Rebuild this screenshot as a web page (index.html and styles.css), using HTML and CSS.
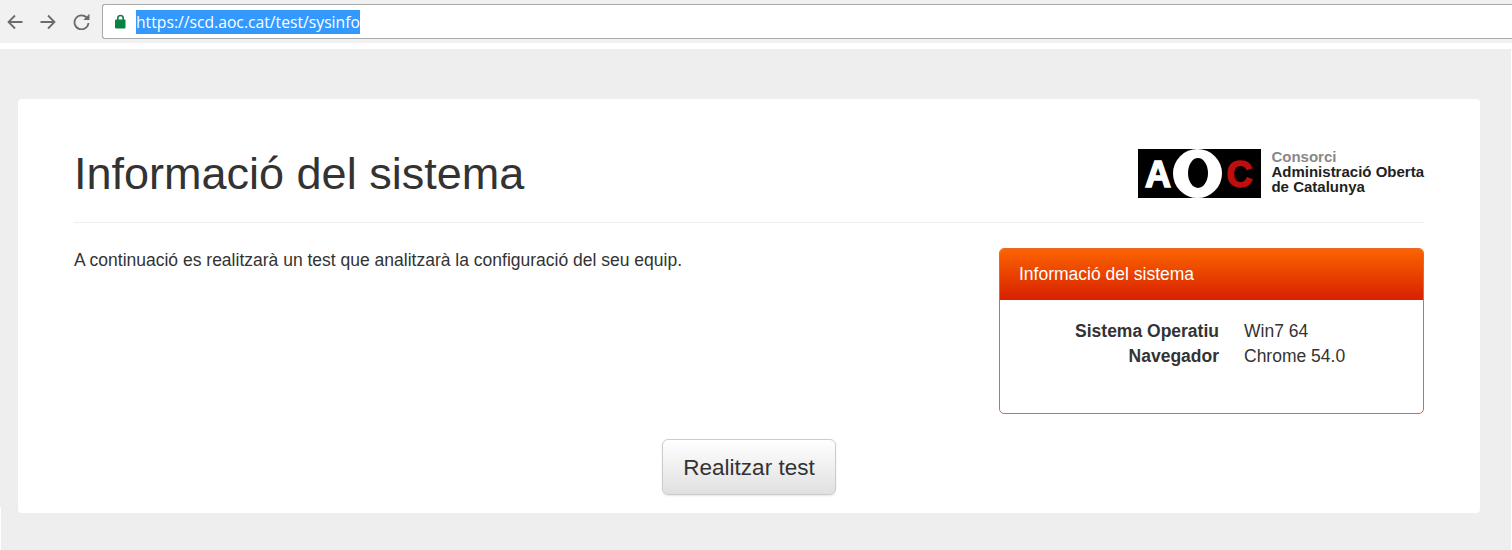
FILE: index.html
```html
<!DOCTYPE html>
<html>
<head>
    <title>Informació del sistema</title>
    <meta charset="UTF-8">
    <link rel="stylesheet" href="styles.css">
</head>
<body>
    <!-- Browser chrome -->
    <div class="toolbar">
        <svg class="nav-icon" width="16" height="16" viewBox="0 0 16 16"><path d="M15.5 8H1.5M8 1.5L1.5 8L8 14.5"/></svg>
        <svg class="nav-icon" width="16" height="16" viewBox="0 0 16 16"><path d="M0.5 8H14.5M8 1.5L14.5 8L8 14.5"/></svg>
        <svg class="nav-icon" width="17" height="17" viewBox="0 0 17 17"><path d="M14.2 5.2A7 7 0 1 0 15.5 10"/><path class="fill" d="M16.5 0.8V7H10.3Z"/></svg>
        <div class="address">
            <svg class="lock" width="11" height="15" viewBox="0 0 11 15"><path d="M2.8 6V4.2a2.7 2.7 0 0 1 5.4 0V6" fill="none" stroke="#0b8043" stroke-width="1.6"/><rect y="5.5" width="10.5" height="9" rx="1" fill="#0b8043"/></svg>
            <span class="url">https://scd.aoc.cat/test/sysinfo</span>
        </div>
    </div>
    <div class="strip"></div>

    <div class="page">
        <div class="card">
            <div class="card-header">
                <h1>Informació del sistema</h1>
                <div class="logo">
                    <svg width="123" height="49" viewBox="0 0 123 49">
                        <rect width="123" height="49" fill="#000"/>
                        <text class="logo-letter" x="7" y="38" fill="#fff" stroke="#fff">A</text>
                        <ellipse cx="59.5" cy="24.5" rx="24.5" ry="24.5" fill="#fff"/>
                        <ellipse cx="60" cy="24" rx="10" ry="15" fill="#000"/>
                        <text class="logo-letter" x="88.5" y="38" fill="#c00d0d" stroke="#c00d0d">C</text>
                    </svg>
                    <div class="logo-text">
                        <span class="logo-grey">Consorci</span>
                        <span>Administració Oberta</span>
                        <span>de Catalunya</span>
                    </div>
                </div>
            </div>

            <div class="card-body">
                <p class="intro">A continuació es realitzarà un test que analitzarà la configuració del seu equip.</p>
                <div class="panel">
                    <div class="panel-heading">Informació del sistema</div>
                    <dl class="panel-body">
                        <dt>Sistema Operatiu</dt>
                        <dd>Win7 64</dd>
                        <dt>Navegador</dt>
                        <dd>Chrome 54.0</dd>
                    </dl>
                </div>
            </div>

            <div class="actions">
                <button class="test-button">Realitzar test</button>
            </div>
        </div>
    </div>
</body>
</html>
```

FILE: styles.css
```css
/* Basic Reset */
* {
    box-sizing: border-box;
    margin: 0;
    padding: 0;
}

html, body {
    width: 1512px;
    height: 550px;
    overflow: hidden;
    background: #ffffff;
    font-family: 'Liberation Sans', Arial, sans-serif;
    color: #333333;
}

/* Browser chrome */
.toolbar {
    display: flex;
    align-items: center;
    height: 43px;
    padding: 4px 0 4px 7px;
    background: #f1f1f1;
}

.nav-icon {
    margin-right: 17px;
    flex: none;
}

.nav-icon path {
    fill: none;
    stroke: #6b6b6b;
    stroke-width: 1.8;
}

.nav-icon path.fill {
    fill: #6b6b6b;
    stroke: none;
}

.address {
    display: flex;
    align-items: center;
    flex: 1;
    height: 35px;
    margin-left: -5px;
    padding-left: 12px;
    background: #ffffff;
    border: 1px solid #a9a9a9;
    border-right: none;
    border-radius: 3px 0 0 3px;
}

.lock {
    margin-right: 10px;
}

.url {
    height: 24px;
    line-height: 24px;
    background: #3399ff;
    color: #ffffff;
    font-family: 'Open Sans', sans-serif;
    font-size: 15.7px;
}

.strip {
    height: 6px;
    margin-left: 1px;
    background: #ffffff;
}

/* Page */
.page {
    height: 501px;
    margin-right: 1px;
    padding: 50px 31px 0 18px;
    background: linear-gradient(#eeeeee 458px, #ffffff 458px) 0 0 / 1px 100% no-repeat, #eeeeee;
}

.card {
    height: 414px;
    padding: 0 56px;
    background: #ffffff;
    border-radius: 4px;
}

.card-header {
    display: flex;
    align-items: flex-end;
    justify-content: space-between;
    height: 124px;
    padding-bottom: 24px;
    border-bottom: 1px solid #eeeeee;
}

h1 {
    margin-bottom: -2px;
    font-size: 45px;
    font-weight: normal;
    line-height: 52px;
}

.logo {
    display: flex;
    align-items: center;
    gap: 10px;
}

.logo svg {
    display: block;
}

.logo-letter {
    font-family: 'Liberation Sans', sans-serif;
    font-size: 36px;
    font-weight: bold;
    stroke-width: 1.5;
}

.logo-text {
    display: flex;
    flex-direction: column;
    padding-bottom: 4px;
    font-size: 15px;
    font-weight: bold;
    line-height: 15px;
    color: #222222;
}

.logo-grey {
    color: #888888;
}

.card-body {
    display: flex;
    justify-content: space-between;
    margin-top: 25px;
}

.intro {
    font-size: 17.5px;
    line-height: 24px;
}

/* Info panel */
.panel {
    width: 425px;
    height: 166px;
    border: 1px solid #e8692b;
    border-radius: 5px;
    overflow: hidden;
}

.panel-heading {
    height: 51px;
    padding-left: 19px;
    line-height: 50px;
    font-size: 17.5px;
    color: #ffffff;
    background: linear-gradient(#fb6400, #d82000);
}

.panel-body {
    display: grid;
    grid-template-columns: 219px auto;
    column-gap: 25px;
    padding-top: 19px;
    font-size: 17.5px;
    line-height: 25px;
}

.panel-body dt {
    font-weight: bold;
    text-align: right;
}

/* Button */
.actions {
    display: flex;
    justify-content: center;
    margin-top: 25px;
}

.test-button {
    width: 174px;
    height: 56px;
    padding-top: 2px;
    font-family: inherit;
    font-size: 22.5px;
    color: #333333;
    background: linear-gradient(#ffffff, #e0e0e0);
    border: 1px solid #cccccc;
    border-radius: 6px;
    box-shadow: 0 1px 2px rgba(0, 0, 0, 0.1);
}
```
